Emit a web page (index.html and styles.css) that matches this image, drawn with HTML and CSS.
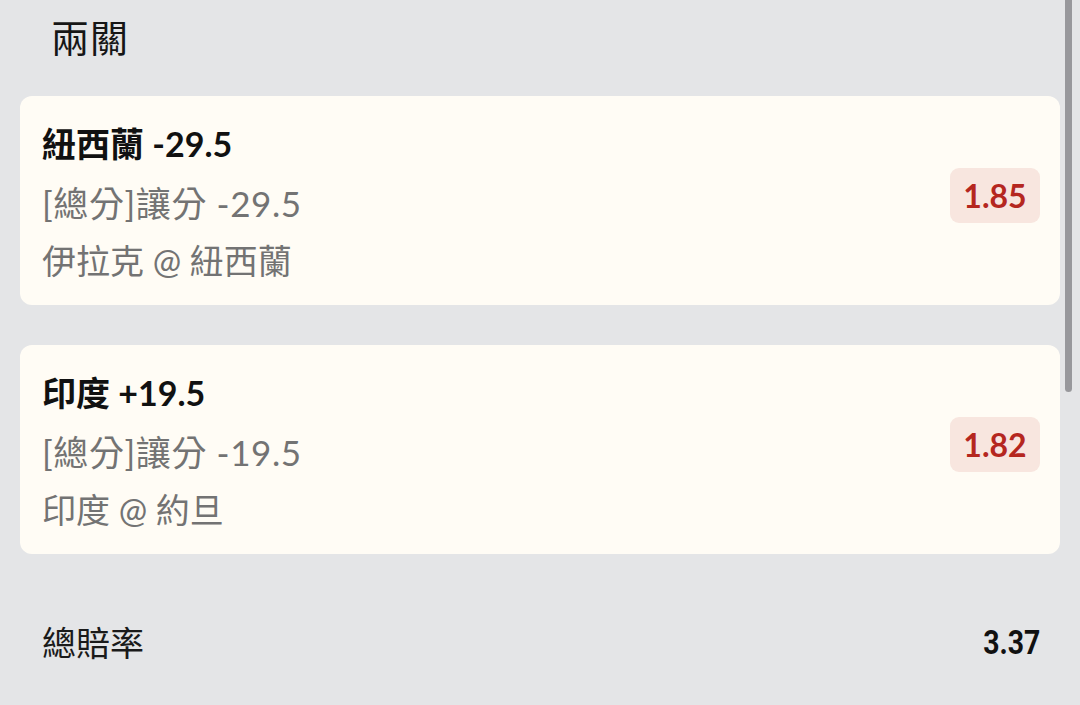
FILE: index.html
```html
<!DOCTYPE html>
<html lang="zh-Hant">
<head>
<meta charset="utf-8">
<link rel="stylesheet" href="styles.css">
</head>
<body>
<div class="page">
  <h1 class="title">兩關</h1>
  <div class="card">
    <div class="info">
      <div class="pick">紐西蘭 -29.5</div>
      <div class="sub market">[總分]讓分 -29.5</div>
      <div class="sub">伊拉克 @ 紐西蘭</div>
    </div>
    <div class="odds">1.85</div>
  </div>
  <div class="card">
    <div class="info">
      <div class="pick">印度 +19.5</div>
      <div class="sub market">[總分]讓分 -19.5</div>
      <div class="sub">印度 @ 約旦</div>
    </div>
    <div class="odds">1.82</div>
  </div>
  <div class="total">
    <span class="total-label">總賠率</span>
    <span class="total-value">3.37</span>
  </div>
</div>
<div class="scrollbar"></div>
</body>
</html>
```
FILE: styles.css
```css
html, body {
  margin: 0;
  padding: 0;
  background: #e4e5e7;
  height: 705px;
  overflow: hidden;
}
body {
  font-family: "Lato", "Noto Sans CJK TC", sans-serif;
  position: relative;
}
.page {
  padding: 0 20px;
}
.title {
  margin: 0;
  padding: 11px 0 0 31px;
  height: 96px;
  box-sizing: border-box;
  font-size: 38px;
  line-height: 50px;
  font-weight: 400;
  color: #161616;
  font-family: "Noto Sans CJK TC", sans-serif;
  letter-spacing: 1px;
}
.card {
  background: #fffcf5;
  border-radius: 12px;
  display: flex;
  align-items: flex-start;
  justify-content: space-between;
  padding: 20px 20px 15px 22px;
  margin-bottom: 40px;
}
.card + .card { margin-bottom: 0; }
.info {
  display: flex;
  flex-direction: column;
}
.pick {
  font-size: 34px;
  line-height: 58px;
  font-weight: 700;
  color: #111;
  margin-top: -1px;
  margin-bottom: 1px;
}
.sub {
  font-size: 34px;
  line-height: 58px;
  color: #737373;
}
.sub.market {
  font-size: 35px;
  letter-spacing: 0.6px;
}
.odds {
  margin-top: 52px;
  width: 90px;
  height: 55px;
  border-radius: 9px;
  background: #f8e6df;
  color: #b5271f;
  font-size: 32px;
  font-weight: 700;
  display: flex;
  align-items: center;
  justify-content: center;
}
.total {
  display: flex;
  justify-content: space-between;
  align-items: center;
  padding: 63px 20px 0 22px;
}
.total-label {
  font-family: "Noto Sans CJK TC", sans-serif;
  font-size: 34px;
  line-height: 50px;
  color: #1a1a1a;
}
.total-value {
  font-family: "Roboto", sans-serif;
  font-size: 33px;
  font-weight: 700;
  color: #111;
  display: inline-block;
  transform: scaleX(0.86);
  transform-origin: right center;
}
.scrollbar {
  position: absolute;
  top: 0;
  left: 1065px;
  width: 7px;
  height: 392px;
  background: #98989c;
  border-radius: 0 0 4px 4px;
}
```
